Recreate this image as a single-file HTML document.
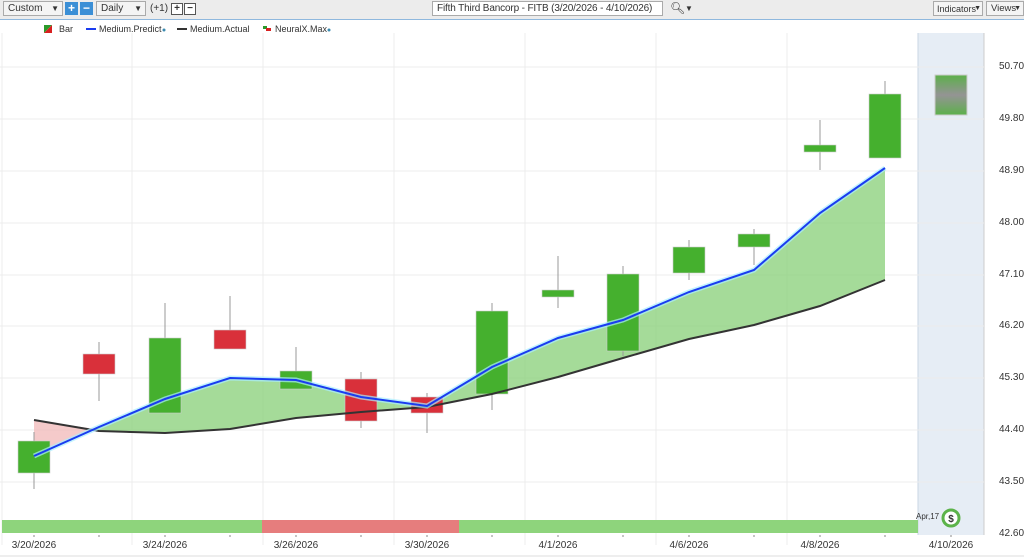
<!DOCTYPE html>
<html><head><meta charset="utf-8"><style>
body{margin:0;width:1024px;height:557px;overflow:hidden;background:#fff;font-family:"Liberation Sans",sans-serif;font-size:11px;color:#333}
.tb{position:absolute;left:0;top:0;width:1024px;height:19px;background:#ececec;border-bottom:1px solid #8fb8de}
.sel{position:absolute;top:1px;height:15px;border:1px solid #aaa;background:#f4f4f4;font-size:10px;line-height:14px;padding-left:4px;box-sizing:border-box;white-space:nowrap;overflow:hidden}
.sel b{position:absolute;right:3px;top:0;font-size:8px}
.ib{position:absolute;top:2px;width:13px;height:13px;background:#3b8fd6;color:#fff;font-weight:bold;text-align:center;line-height:13px;font-size:12px}
.sb{position:absolute;top:3px;width:10px;height:10px;border:1px solid #555;background:#fff;font-size:10px;line-height:10px;text-align:center;font-weight:bold}
.ax{position:absolute;left:999px;font-size:10px;color:#333}
.dx{position:absolute;top:540px;font-size:10px;color:#333;transform:translateX(-50%)}
</style></head><body>
<div class="tb">
<div class="sel" style="left:3px;width:60px">Custom<b>▼</b></div>
<div class="ib" style="left:65px">+</div><div class="ib" style="left:80px">−</div>
<div class="sel" style="left:96px;width:50px">Daily<b>▼</b></div>
<span style="position:absolute;left:150px;top:3px;font-size:10px">(+1)</span>
<div class="sb" style="left:171px">+</div><div class="sb" style="left:184px">−</div>
<div class="sel" style="left:432px;width:231px;background:#fff;font-size:10px;letter-spacing:-0.15px;padding-left:4px">Fifth Third Bancorp - FITB (3/20/2026 - 4/10/2026)</div>
<span style="position:absolute;left:670px;top:1px;font-size:12px">&#x1F50D;&#xFE0E;</span><span style="position:absolute;left:685px;top:4px;font-size:8px">▼</span>
<div class="sel" style="left:933px;width:50px;font-size:9px;padding-left:3px">Indicators<b style="right:1px;font-size:7px">▼</b></div>
<div class="sel" style="left:986px;width:38px;font-size:9.5px">Views<b style="right:2px;font-size:7px">▼</b></div>
</div>
<svg width="1024" height="557" style="position:absolute;left:0;top:0">
<rect x="918" y="33" width="66" height="502" fill="#e6edf5"/>
<line x1="918" y1="33" x2="918" y2="535" stroke="#c9d6e4"/>
<line x1="984" y1="33" x2="984" y2="535" stroke="#ccc"/>
<g stroke="#ececec">
<line x1="0" y1="67" x2="984" y2="67"/><line x1="0" y1="119" x2="984" y2="119"/><line x1="0" y1="171" x2="984" y2="171"/><line x1="0" y1="223" x2="984" y2="223"/><line x1="0" y1="275" x2="984" y2="275"/><line x1="0" y1="326" x2="984" y2="326"/><line x1="0" y1="378" x2="984" y2="378"/><line x1="0" y1="430" x2="984" y2="430"/><line x1="0" y1="482" x2="984" y2="482"/>
<line x1="132" y1="33" x2="132" y2="545"/><line x1="263" y1="33" x2="263" y2="545"/><line x1="394" y1="33" x2="394" y2="545"/><line x1="525" y1="33" x2="525" y2="545"/><line x1="656" y1="33" x2="656" y2="545"/><line x1="787" y1="33" x2="787" y2="545"/>
<line x1="2" y1="33" x2="2" y2="545"/>
</g>
<polygon points="34,420 34,456 95,429" fill="#f2b8b8" opacity="0.75"/>
<polygon points="95,429 165,399 230,378 296,380 361,397 427,406 492,367 558,338 623,320 689,292 754,270 820,213 885,168 885,280 820,306 754,325 689,339 623,358 558,377 492,394 427,407 361,412 296,418 230,429 165,433 99,431" fill="#8fd27f" opacity="0.8"/>
<g stroke="#999" stroke-width="1">
<line x1="34" y1="432" x2="34" y2="489"/><line x1="99" y1="342" x2="99" y2="401"/><line x1="165" y1="303" x2="165" y2="413"/><line x1="230" y1="296" x2="230" y2="349"/><line x1="296" y1="347" x2="296" y2="389"/><line x1="361" y1="372" x2="361" y2="428"/><line x1="427" y1="393" x2="427" y2="433"/><line x1="492" y1="303" x2="492" y2="410"/><line x1="558" y1="256" x2="558" y2="308"/><line x1="623" y1="266" x2="623" y2="356"/><line x1="689" y1="240" x2="689" y2="280"/><line x1="754" y1="229" x2="754" y2="265"/><line x1="820" y1="120" x2="820" y2="170"/><line x1="885" y1="81" x2="885" y2="158"/>
</g>
<g stroke="#ccc" stroke-width="0.6">
<rect x="18" y="441" width="32" height="32" fill="#45b02e"/>
<rect x="83" y="354" width="32" height="20" fill="#d9303a"/>
<rect x="149" y="338" width="32" height="75" fill="#45b02e"/>
<rect x="214" y="330" width="32" height="19" fill="#d9303a"/>
<rect x="280" y="371" width="32" height="18" fill="#45b02e"/>
<rect x="345" y="379" width="32" height="42" fill="#d9303a"/>
<rect x="411" y="397" width="32" height="16" fill="#d9303a"/>
<rect x="476" y="311" width="32" height="83" fill="#45b02e"/>
<rect x="542" y="290" width="32" height="7" fill="#45b02e"/>
<rect x="607" y="274" width="32" height="77" fill="#45b02e"/>
<rect x="673" y="247" width="32" height="26" fill="#45b02e"/>
<rect x="738" y="234" width="32" height="13" fill="#45b02e"/>
<rect x="804" y="145" width="32" height="7" fill="#45b02e"/>
<rect x="869" y="94" width="32" height="64" fill="#45b02e"/>
</g>
<defs><linearGradient id="fg" x1="0" y1="0" x2="0" y2="1"><stop offset="0" stop-color="#5cb04a"/><stop offset="0.5" stop-color="#949494"/><stop offset="1" stop-color="#5cb04a"/></linearGradient></defs>
<rect x="935" y="75" width="32" height="40" fill="url(#fg)" stroke="#ccc"/>
<polyline points="34,420 99,431 165,433 230,429 296,418 361,412 427,407 492,394 558,377 623,358 689,339 754,325 820,306 885,280" fill="none" stroke="#333" stroke-width="2"/>
<polyline points="34,456 99,427 165,399 230,378 296,380 361,397 427,406 492,367 558,338 623,320 689,292 754,270 820,213 885,168" fill="none" stroke="#aef" stroke-width="5" opacity="0.7"/>
<polyline points="34,456 99,427 165,399 230,378 296,380 361,397 427,406 492,367 558,338 623,320 689,292 754,270 820,213 885,168" fill="none" stroke="#1a3cf0" stroke-width="2"/>
<rect x="2" y="520" width="260" height="13" fill="#8ed47c"/>
<rect x="262" y="520" width="197" height="13" fill="#e67d7d"/>
<rect x="459" y="520" width="459" height="13" fill="#8ed47c"/>
<g stroke="#888"><line x1="34" y1="535" x2="34" y2="537"/><line x1="99" y1="535" x2="99" y2="537"/><line x1="165" y1="535" x2="165" y2="537"/><line x1="230" y1="535" x2="230" y2="537"/><line x1="296" y1="535" x2="296" y2="537"/><line x1="361" y1="535" x2="361" y2="537"/><line x1="427" y1="535" x2="427" y2="537"/><line x1="492" y1="535" x2="492" y2="537"/><line x1="558" y1="535" x2="558" y2="537"/><line x1="623" y1="535" x2="623" y2="537"/><line x1="689" y1="535" x2="689" y2="537"/><line x1="754" y1="535" x2="754" y2="537"/><line x1="820" y1="535" x2="820" y2="537"/><line x1="885" y1="535" x2="885" y2="537"/><line x1="951" y1="535" x2="951" y2="537"/></g>
<line x1="0" y1="556" x2="1024" y2="556" stroke="#ddd"/>
<circle cx="951" cy="518" r="8" fill="#fff" stroke="#5cb34a" stroke-width="3"/>
<text x="951" y="522" font-size="10" text-anchor="middle" font-weight="bold" fill="#333" font-family="Liberation Sans">$</text>
<text x="916" y="519" font-size="8" fill="#333" font-family="Liberation Sans">Apr,17</text>
<polygon points="44,25 52,25 44,33" fill="#2a9a2a"/><polygon points="52,25 52,33 44,33" fill="#d82020"/>
<text x="59" y="32" font-size="9" fill="#333" font-family="Liberation Sans">Bar</text>
<rect x="86" y="28" width="10" height="2" fill="#1a3cf0"/>
<text x="99" y="32" font-size="9" fill="#333" font-family="Liberation Sans">Medium.Predict</text><circle cx="164" cy="30" r="1.5" fill="#3b8ab0"/>
<rect x="177" y="28" width="10" height="2" fill="#333"/>
<text x="190" y="32" font-size="9" fill="#333" font-family="Liberation Sans">Medium.Actual</text>
<rect x="263" y="26" width="4" height="3" fill="#2a9a2a"/><rect x="266" y="28" width="5" height="3" fill="#d82020"/>
<text x="275" y="32" font-size="9" fill="#333" font-family="Liberation Sans">NeuralX.Max</text><circle cx="329" cy="30" r="1.5" fill="#3b8ab0"/>
</svg>
<div class="ax" style="top:61px">50.70</div><div class="ax" style="top:113px">49.80</div><div class="ax" style="top:165px">48.90</div><div class="ax" style="top:217px">48.00</div><div class="ax" style="top:269px">47.10</div><div class="ax" style="top:320px">46.20</div><div class="ax" style="top:372px">45.30</div><div class="ax" style="top:424px">44.40</div><div class="ax" style="top:476px">43.50</div><div class="ax" style="top:528px">42.60</div>
<div class="dx" style="left:34px">3/20/2026</div><div class="dx" style="left:165px">3/24/2026</div><div class="dx" style="left:296px">3/26/2026</div><div class="dx" style="left:427px">3/30/2026</div><div class="dx" style="left:558px">4/1/2026</div><div class="dx" style="left:689px">4/6/2026</div><div class="dx" style="left:820px">4/8/2026</div><div class="dx" style="left:951px">4/10/2026</div>
</body></html>
